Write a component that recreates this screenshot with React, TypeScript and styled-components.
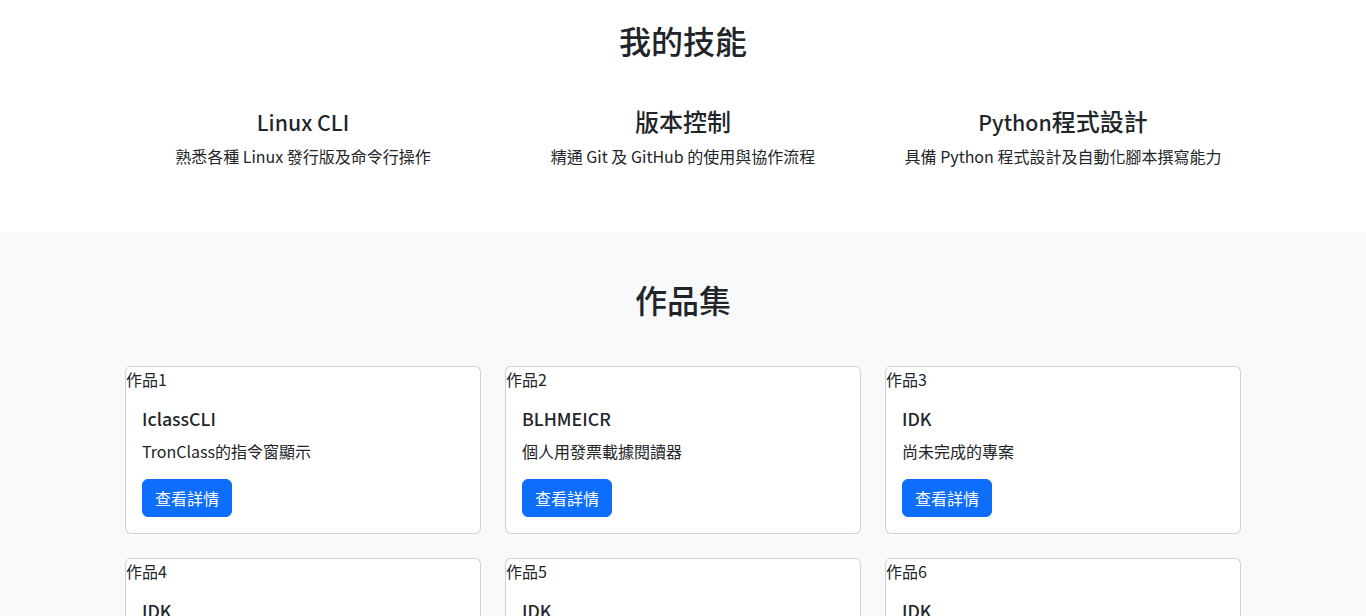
import React from "react";
import styled, { createGlobalStyle } from "styled-components";

const Global = createGlobalStyle`
  *, *::before, *::after { box-sizing: border-box; }
  html, body { margin: 0; padding: 0; }
  body {
    font-family: "Noto Sans CJK TC", "Noto Sans", sans-serif;
    font-size: 16px;
    line-height: 1.5;
    color: #212529;
    background: #fff;
  }
`;

const headingFont = `"Source Sans 3", "Noto Sans CJK TC", sans-serif`;

const Section = styled.section<{ $light?: boolean; $top?: number }>`
  background: ${(p) => (p.$light ? "#f8f9fa" : "#fff")};
  padding: ${(p) => p.$top ?? 48}px 0 48px;
`;

const Container = styled.div`
  max-width: 1140px;
  margin: 0 auto;
  padding: 0 12px;
`;

const Title = styled.h2<{ $mb: number }>`
  font-family: "Noto Sans CJK TC", sans-serif;
  font-size: 32px;
  font-weight: 500;
  line-height: 1.2;
  text-align: center;
  margin: 0 0 ${(p) => p.$mb}px;
`;

const Row = styled.div`
  display: grid;
  grid-template-columns: repeat(3, 1fr);
  margin: 0 -12px;
`;

const SkillCol = styled.div`
  padding: 0 12px;
  text-align: center;
`;

const SkillName = styled.h3`
  font-family: ${headingFont};
  font-size: 24px;
  font-weight: 500;
  line-height: 1.2;
  padding-top: 3px;
  margin: 0 0 4.8px;
`;

const Text = styled.p<{ $mb?: number }>`
  margin: 0 0 ${(p) => p.$mb ?? 16}px;
`;

const CardGrid = styled.div`
  display: grid;
  grid-template-columns: repeat(3, 1fr);
  gap: 24px;
`;

const Card = styled.div`
  background: #fff;
  border: 1px solid rgba(0, 0, 0, 0.175);
  border-radius: 6px;
  display: flex;
  flex-direction: column;
  overflow: hidden;
`;

const Thumb = styled.span`
  display: block;
  line-height: 24px;
  height: 24px;
`;

const CardBody = styled.div`
  padding: 16px;
`;

const CardTitle = styled.h5`
  font-family: ${headingFont};
  font-size: 20px;
  font-weight: 500;
  line-height: 1.2;
  padding-top: 1px;
  margin: 0 0 7px;
`;

const Button = styled.a`
  display: inline-block;
  background: #0d6efd;
  color: #fff;
  border: 1px solid #0d6efd;
  border-radius: 6px;
  padding: 6px 12px;
  font-size: 16px;
  line-height: 24px;
  text-decoration: none;
`;

const skills = [
  { name: "Linux CLI", desc: "熟悉各種 Linux 發行版及命令行操作" },
  { name: "版本控制", desc: "精通 Git 及 GitHub 的使用與協作流程" },
  { name: "Python程式設計", desc: "具備 Python 程式設計及自動化腳本撰寫能力" },
];

const works = [
  { title: "IclassCLI", desc: "TronClass的指令窗顯示" },
  { title: "BLHMEICR", desc: "個人用發票載據閱讀器" },
  { title: "IDK", desc: "尚未完成的專案" },
  { title: "IDK", desc: "尚未完成的專案" },
  { title: "IDK", desc: "尚未完成的專案" },
  { title: "IDK", desc: "尚未完成的專案" },
];

export default function App() {
  return (
    <>
      <Global />
      <Section $top={21}>
        <Container>
          <Title $mb={48}>我的技能</Title>
          <Row>
            {skills.map((s) => (
              <SkillCol key={s.name}>
                <SkillName>{s.name}</SkillName>
                <Text>{s.desc}</Text>
              </SkillCol>
            ))}
          </Row>
        </Container>
      </Section>
      <Section $light>
        <Container>
          <Title $mb={48}>作品集</Title>
          <CardGrid>
            {works.map((w, i) => (
              <Card key={i}>
                <Thumb>作品{i + 1}</Thumb>
                <CardBody>
                  <CardTitle>{w.title}</CardTitle>
                  <Text>{w.desc}</Text>
                  <Button href="#">查看詳情</Button>
                </CardBody>
              </Card>
            ))}
          </CardGrid>
        </Container>
      </Section>
    </>
  );
}
